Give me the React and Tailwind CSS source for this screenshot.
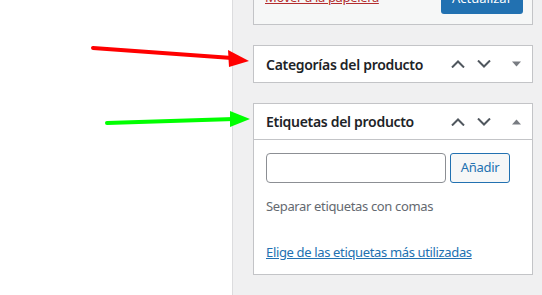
import React from "react";

function Chevron({ up }) {
  return (
    <svg width="14" height="8" viewBox="0 0 14 8" className="block">
      <path
        d={up ? "M1 7.5 L7 1.5 L13 7.5" : "M1 0.5 L7 6.5 L13 0.5"}
        fill="none"
        stroke="#50575e"
        strokeWidth="2"
      />
    </svg>
  );
}

function Triangle({ up }) {
  return (
    <svg width="9" height="6" viewBox="0 0 9 6" className="block">
      <path d={up ? "M0 5.5 L4.5 0.5 L9 5.5 Z" : "M0 0.5 L4.5 5.5 L9 0.5 Z"} fill="#787c82" />
    </svg>
  );
}

function BoxHeader({ title, open }) {
  return (
    <div className={`flex h-[36px] items-center pl-[12px] ${open ? "border-b border-[#c3c4c7]" : ""}`}>
      <h2 className="flex-1 text-[14px] font-semibold tracking-[-0.3px] text-[#1d2327]">{title}</h2>
      <div className="flex items-center">
        <span className="flex w-[26px] justify-center"><Chevron up /></span>
        <span className="mr-[3px] flex w-[26px] justify-center"><Chevron /></span>
        <span className="flex w-[32px] justify-center"><Triangle up={open} /></span>
      </div>
    </div>
  );
}

export default function App() {
  return (
    <div className="relative flex h-[295px] w-[542px] overflow-hidden bg-white font-['Noto_Sans',sans-serif]">
      <div className="w-[233px] border-r border-[#dcdcde] bg-white" />
      <div className="flex-1 bg-[#f0f0f1] pl-[20px]">
        <div className="flex w-[280px] flex-col gap-[20px]">
          <div className="-mt-[22px] flex h-[47px] items-end justify-between border border-[#c3c4c7] bg-[#f6f7f7] pb-[10px] pl-[11px] pr-[9px]">
            <a className="mb-[8px] text-[13px] leading-[18px] tracking-[-0.35px] text-[#b32d2e] underline">Mover a la papelera</a>
            <button className="h-[30px] w-[82px] rounded-[3px] bg-[#2271b1] text-[13px] text-white">Actualizar</button>
          </div>

          <div className="border border-[#c3c4c7] bg-white">
            <BoxHeader title="Categorías del producto" />
          </div>

          <div className="border border-[#c3c4c7] bg-white">
            <BoxHeader title="Etiquetas del producto" open />
            <div className="px-[12px] pb-[13px] pt-[13px]">
              <div className="flex gap-[4px]">
                <input className="h-[30px] w-[180px] rounded-[4px] border border-[#8c8f94] bg-white" />
                <button className="h-[30px] w-[60px] rounded-[3px] border border-[#2271b1] bg-[#f6f7f7] text-[13px] tracking-[-0.3px] text-[#2271b1]">Añadir</button>
              </div>
              <p className="mt-[14px] text-[13px] leading-[18px] tracking-[-0.35px] text-[#646970]">Separar etiquetas con comas</p>
              <a className="mt-[28px] block text-[13px] leading-[18px] tracking-[-0.35px] text-[#2271b1] underline">Elige de las etiquetas más utilizadas</a>
            </div>
          </div>
        </div>
      </div>

      <svg className="pointer-events-none absolute left-0 top-0" width="542" height="295">
        <line x1="93" y1="48" x2="232" y2="58" stroke="#ff0000" strokeWidth="4" strokeLinecap="round" />
        <polygon points="228,50 249,61 229,67" fill="#ff0000" />
        <line x1="107" y1="123" x2="234" y2="119" stroke="#00ff00" strokeWidth="4" strokeLinecap="round" />
        <polygon points="230,111 250,119 230,127" fill="#00ff00" />
      </svg>
    </div>
  );
}
